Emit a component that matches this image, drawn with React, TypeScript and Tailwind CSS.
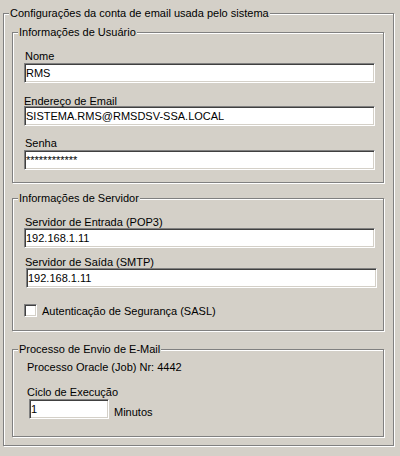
import React from "react";

const FACE = "#d4d0c8";

function Group({
  title,
  className,
  children,
}: {
  title: string;
  className: string;
  children?: React.ReactNode;
}) {
  return (
    <div
      className={`relative border border-[#808080] shadow-[inset_1px_1px_0_#ffffff,1px_1px_0_#ffffff] ${className}`}
    >
      <span className="absolute left-[5px] top-[-7px] bg-[#d4d0c8] px-px leading-[12px] whitespace-nowrap">
        {title}
      </span>
      {children}
    </div>
  );
}

function Edit({ value, className }: { value: string; className: string }) {
  return (
    <input
      readOnly
      value={value}
      className={`block h-[20px] bg-white border border-t-[#808080] border-l-[#808080] border-b-white border-r-white shadow-[inset_1px_1px_0_#404040,inset_-1px_-1px_0_#d4d0c8] pl-[1px] text-[11px] text-black outline-none ${className}`}
      style={{ fontFamily: "inherit" }}
    />
  );
}

function Label({ text, className }: { text: string; className: string }) {
  return <div className={`leading-[12px] h-[12px] whitespace-nowrap ${className}`}>{text}</div>;
}

export default function App() {
  return (
    <div
      className="w-[400px] h-[456px] bg-[#d4d0c8] text-[11px] text-black pt-[13px] pl-[3px]"
      style={{ fontFamily: '"Liberation Sans", Arial, sans-serif', backgroundColor: FACE }}
    >
      <Group
        title="Configurações da conta de email usada pelo sistema"
        className="w-[391px] h-[433px] pt-[18px] pl-[8px]"
      >
        <Group title="Informações de Usuário" className="w-[372px] h-[151px] pt-[17px] pl-[11px]">
          <Label text="Nome" className="ml-[1px]" />
          <Edit value="RMS" className="mt-[1px] w-[351px]" />
          <Label text="Endereço de Email" className="mt-[12px]" />
          <Edit value="SISTEMA.RMS@RMSDSV-SSA.LOCAL" className="mt-[-1px] w-[351px]" />
          <Label text="Senha" className="mt-[11px] ml-[1px]" />
          <Edit value="************" className="mt-[1px] w-[351px]" />
        </Group>

        <Group title="Informações de Servidor" className="mt-[15px] w-[372px] h-[133px] pt-[17px] pl-[11px]">
          <Label text="Servidor de Entrada (POP3)" className="ml-[1px]" />
          <Edit value="192.168.1.11" className="w-[351px]" />
          <Label text="Servidor de Saída (SMTP)" className="mt-[8px] ml-[1px]" />
          <Edit value="192.168.1.11" className="ml-[2px] w-[351px]" />
          <div className="mt-[16px] flex items-center">
            <span className="block w-[13px] h-[13px] bg-white border border-t-[#808080] border-l-[#808080] border-b-white border-r-white shadow-[inset_1px_1px_0_#404040,inset_-1px_-1px_0_#d4d0c8]" />
            <span className="ml-[5px] leading-[12px]">Autenticação de Segurança (SASL)</span>
          </div>
        </Group>

        <Group title="Processo de Envio de E-Mail" className="mt-[18px] w-[372px] h-[88px] pt-[11px] pl-[11px]">
          <Label text="Processo Oracle (Job) Nr: 4442" className="ml-[3px]" />
          <Label text="Ciclo de Execução" className="mt-[13px] ml-[3px]" />
          <div className="mt-[1px] flex items-start">
            <Edit value="1" className="ml-[5px] w-[80px]" />
            <span className="ml-[5px] mt-[7px] leading-[12px]">Minutos</span>
          </div>
        </Group>
      </Group>
    </div>
  );
}
